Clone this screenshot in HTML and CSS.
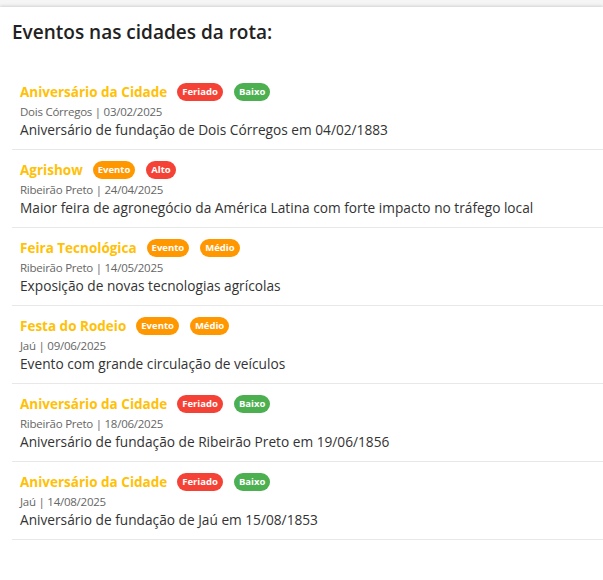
FILE: index.html
```html
<!DOCTYPE html>
<html lang="pt-BR">
<head>
<meta charset="utf-8">
<link rel="stylesheet" href="styles.css">
</head>
<body>
<div class="card">
  <h2 class="heading">Eventos nas cidades da rota:</h2>
  <ul class="events">
    <li class="event">
      <div class="event-head"><span class="event-title">Aniversário da Cidade</span><span class="badge red">Feriado</span><span class="badge green">Baixo</span></div>
      <div class="event-meta">Dois Córregos | 03/02/2025</div>
      <div class="event-desc">Aniversário de fundação de Dois Córregos em 04/02/1883</div>
    </li>
    <li class="event">
      <div class="event-head"><span class="event-title">Agrishow</span><span class="badge orange">Evento</span><span class="badge red">Alto</span></div>
      <div class="event-meta">Ribeirão Preto | 24/04/2025</div>
      <div class="event-desc">Maior feira de agronegócio da América Latina com forte impacto no tráfego local</div>
    </li>
    <li class="event">
      <div class="event-head"><span class="event-title">Feira Tecnológica</span><span class="badge orange">Evento</span><span class="badge orange">Médio</span></div>
      <div class="event-meta">Ribeirão Preto | 14/05/2025</div>
      <div class="event-desc">Exposição de novas tecnologias agrícolas</div>
    </li>
    <li class="event">
      <div class="event-head"><span class="event-title">Festa do Rodeio</span><span class="badge orange">Evento</span><span class="badge orange">Médio</span></div>
      <div class="event-meta">Jaú | 09/06/2025</div>
      <div class="event-desc">Evento com grande circulação de veículos</div>
    </li>
    <li class="event">
      <div class="event-head"><span class="event-title">Aniversário da Cidade</span><span class="badge red">Feriado</span><span class="badge green">Baixo</span></div>
      <div class="event-meta">Ribeirão Preto | 18/06/2025</div>
      <div class="event-desc">Aniversário de fundação de Ribeirão Preto em 19/06/1856</div>
    </li>
    <li class="event">
      <div class="event-head"><span class="event-title">Aniversário da Cidade</span><span class="badge red">Feriado</span><span class="badge green">Baixo</span></div>
      <div class="event-meta">Jaú | 14/08/2025</div>
      <div class="event-desc">Aniversário de fundação de Jaú em 15/08/1853</div>
    </li>
  </ul>
</div>
</body>
</html>
```
FILE: styles.css
```css
html, body {
  margin: 0;
  padding: 0;
}
body {
  background: #f5f5f5;
  font-family: "Open Sans", "Noto Sans", sans-serif;
  color: #333;
  padding-top: 7px;
  height: 573px;
  overflow: hidden;
}
.card {
  background: #fff;
  box-shadow: 0 -1px 3px rgba(0,0,0,0.15);
  height: 100%;
  padding: 0 0 0 12px;
}
.heading {
  margin: 0;
  padding-top: 12px;
  font-size: 19px;
  font-weight: 600;
  line-height: 26px;
  color: #222;
}
.events {
  list-style: none;
  margin: 0;
  padding: 0;
  margin-top: 27px;
}
.event {
  padding: 10px 8px 9px;
  border-bottom: 1px solid #e8e8e8;
}
.event-head {
  display: flex;
  align-items: center;
  height: 20px;
}
.event-title {
  color: #ffc107;
  font-weight: 700;
  font-size: 13.5px;
  margin-right: 10px;
}
.badge {
  color: #fff;
  font-size: 9.5px;
  font-weight: 700;
  height: 18px;
  line-height: 18px;
  padding: 0 5px;
  border-radius: 9px;
  margin-right: 11px;
}
.red { background: #f44336; }
.green { background: #4caf50; }
.orange { background: #ff9800; }
.event-meta {
  font-size: 11.5px;
  letter-spacing: -0.25px;
  color: #666;
  line-height: 16px;
  margin-top: 2px;
}
.event-desc {
  font-size: 13.7px;
  color: #333;
  line-height: 20px;
}
```
